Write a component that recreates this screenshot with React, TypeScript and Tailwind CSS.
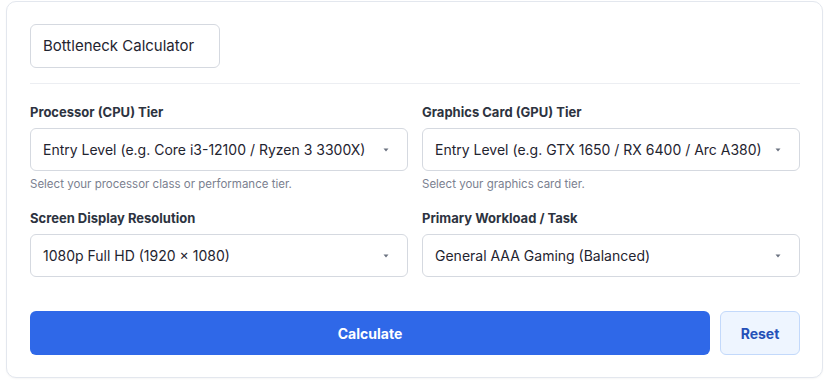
const Field = ({ label, value, help }: { label: string; value: string; help?: string }) => (
  <div className="flex flex-col min-w-0">
    <label className="text-[13px] leading-5 font-bold text-[#2d3340] mb-[6px]">{label}</label>
    <div className="flex items-center justify-between h-[43px] px-[12px] border border-[#d5d9e0] rounded-[6px] bg-white">
      <span className="text-[14px] text-[#1f2430] whitespace-nowrap overflow-hidden">{value}</span>
      <svg className="shrink-0 w-[8px] h-[8px] mr-[5px] text-[#6b7280]" viewBox="0 0 8 8">
        <path d="M1.5 2.5 L6.5 2.5 L4 5.5 Z" fill="currentColor" />
      </svg>
    </div>
    {help && <p className="mt-[5px] text-[11.5px] leading-4 text-[#7b8190]">{help}</p>}
  </div>
);

export default function App() {
  return (
    <div className="w-[829px] h-[384px] bg-white pl-[6px] pr-[6px] pt-[1px]" style={{ fontFamily: 'Inter, "Noto Sans", sans-serif' }}>
      <div className="border border-[#e3e7ee] rounded-[10px] bg-white pl-[23px] pr-[22px] pt-[22px] pb-[22px] shadow-[0_1px_2px_rgba(0,0,0,0.04)]">
        <div className="inline-flex items-center h-[44px] w-[190px] px-[12px] border border-[#d5d9e0] rounded-[6px] text-[15px] text-[#1f2430]">
          Bottleneck Calculator
        </div>
        <div className="mt-[15px] border-t border-[#eceef2]" />
        <div className="mt-[18px] grid grid-cols-2 gap-x-[14px] gap-y-[16px]">
          <Field label="Processor (CPU) Tier" value="Entry Level (e.g. Core i3-12100 / Ryzen 3 3300X)" help="Select your processor class or performance tier." />
          <Field label="Graphics Card (GPU) Tier" value="Entry Level (e.g. GTX 1650 / RX 6400 / Arc A380)" help="Select your graphics card tier." />
          <Field label="Screen Display Resolution" value="1080p Full HD (1920 × 1080)" />
          <Field label="Primary Workload / Task" value="General AAA Gaming (Balanced)" />
        </div>
        <div className="mt-[34px] flex gap-[10px]">
          <button className="flex-1 h-[44px] rounded-[6px] bg-[#2f68e8] text-white text-[14px] font-bold">Calculate</button>
          <button className="w-[80px] h-[44px] rounded-[6px] bg-[#eef5ff] border border-[#c3d9fb] text-[#2450b8] text-[14px] font-bold">Reset</button>
        </div>
      </div>
    </div>
  );
}
